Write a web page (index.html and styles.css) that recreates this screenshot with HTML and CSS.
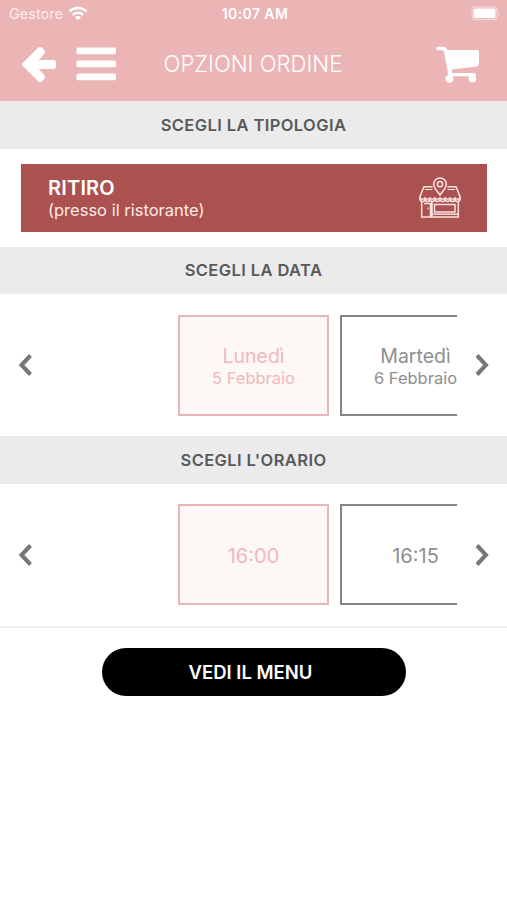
FILE: index.html
```html
<!DOCTYPE html>
<html lang="it">
<head>
    <meta charset="UTF-8">
    <meta name="viewport" content="width=device-width, initial-scale=1">
    <title>Opzioni ordine</title>
    <link rel="stylesheet" href="styles.css">
</head>
<body>
    <header class="header">
        <div class="status-bar">
            <div class="carrier">
                <span class="carrier-name">Gestore</span>
                <svg width="20" height="15" viewBox="0 0 20 15" fill="none" stroke="#fff" stroke-width="2.5">
                    <path d="M1.5 5.4C6.2 0.9 13.8 0.9 18.5 5.4"/>
                    <path d="M4.8 8.8C7.7 6 12.3 6 15.2 8.8"/>
                    <path d="M10 14L6.9 11C8.6 9.5 11.4 9.5 13.1 11Z" fill="#fff" stroke="none"/>
                </svg>
            </div>
            <span class="clock">10:07 AM</span>
            <svg class="battery" width="30" height="15" viewBox="0 0 30 15">
                <rect x="1" y="1" width="25" height="12.5" rx="3" fill="none" stroke="#f5d3d4" stroke-width="1.3"/>
                <rect x="2.5" y="2.5" width="22" height="9.5" rx="1.5" fill="#fff"/>
                <path d="M27.3 5.2C29.2 5.8 29.2 8.8 27.3 9.4Z" fill="#f5d3d4"/>
            </svg>
        </div>
        <nav class="navbar">
            <div class="nav-left">
                <svg width="34" height="37" viewBox="0 0 34 37" fill="#fff">
                    <path d="M0.8 17L15.8 2Q18.2 0 20.5 2.3L22 3.8Q24 6 22 8.4L16.5 14H31Q34 14 34 17V20Q34 23 31 23H16.5L22 28.6Q24 31 22 33.2L20.5 34.7Q18.2 37 15.8 35L0.8 20Q-0.5 18.5 0.8 17Z"/>
                </svg>
                <svg width="40" height="34" viewBox="0 0 40 34" fill="#fff">
                    <rect x="0.5" y="0.5" width="39.5" height="6.8" rx="1.5"/>
                    <rect x="0.5" y="13.5" width="39.5" height="6.8" rx="1.5"/>
                    <rect x="0.5" y="26.5" width="39.5" height="6.8" rx="1.5"/>
                </svg>
            </div>
            <h1>OPZIONI ORDINE</h1>
            <svg class="cart" width="44" height="38" viewBox="0 0 44 38">
                <path d="M2 2.5H7.5Q9 2.5 9.4 4.3L13.4 24.5" fill="none" stroke="#fff" stroke-width="3.6" stroke-linecap="round"/>
                <path d="M9 4H41Q43 4 43 6V18Q43 20 41 20.4L16 23.5V27H38Q40 27 40 28.6Q40 30.2 38 30.2H13Q11 29 12 25Z" fill="#fff"/>
                <circle cx="13.5" cy="32.7" r="4" fill="#fff"/>
                <circle cx="36.4" cy="32.7" r="3.8" fill="#fff"/>
            </svg>
        </nav>
    </header>

    <h2 class="section-title">SCEGLI LA TIPOLOGIA</h2>
    <div class="type-section">
        <div class="type-card">
            <div class="type-text">
                <div class="type-name">RITIRO</div>
                <div class="type-info">(presso il ristorante)</div>
            </div>
            <svg width="42" height="42" viewBox="0 0 42 42" fill="none" stroke="#fbe3df" stroke-width="1.5">
                <path d="M13.5 9.7H5L1 19.5V22H41V19.5L37 9.7H28.5"/>
                <path d="M6 12.5H13.5M28.5 12.5H36" stroke-width="1.2"/>
                <path d="M21 18C18.5 14 14.7 11.5 14.7 7.2A6.3 6.3 0 0 1 27.3 7.2C27.3 11.5 23.5 14 21 18Z"/>
                <circle cx="21" cy="7.2" r="2.6"/>
                <path d="M1 20V22A2.5 2.5 0 0 0 6 22A2.5 2.5 0 0 0 11 22A2.5 2.5 0 0 0 16 22A2.5 2.5 0 0 0 21 22A2.5 2.5 0 0 0 26 22A2.5 2.5 0 0 0 31 22A2.5 2.5 0 0 0 36 22A2.5 2.5 0 0 0 41 22V20M6 20V22M11 20V22M16 20V22M21 20V22M26 20V22M31 20V22M36 20V22"/>
                <path d="M2.7 24.5V40H39.3V24.5M5 26.5H11.5V40M13 25V40"/>
                <rect x="15.5" y="27.5" width="20.5" height="7.5"/>
                <path d="M13.5 37.2H39"/>
                <path d="M9 30.5V32.2" stroke-width="1.2"/>
            </svg>
        </div>
    </div>

    <h2 class="section-title">SCEGLI LA DATA</h2>
    <div class="slider">
        <svg class="arrow" width="14" height="24" viewBox="0 0 14 24">
            <path d="M12.5 2.5L3.5 12L12.5 21.5"/>
        </svg>
        <div class="slider-track">
            <div class="option selected">
                <div class="option-main">Lunedì</div>
                <div class="option-sub">5 Febbraio</div>
            </div>
            <div class="option">
                <div class="option-main">Martedì</div>
                <div class="option-sub">6 Febbraio</div>
            </div>
        </div>
        <svg class="arrow" width="14" height="24" viewBox="0 0 14 24">
            <path d="M2 2.5L11 12L2 21.5"/>
        </svg>
    </div>

    <h2 class="section-title">SCEGLI L'ORARIO</h2>
    <div class="slider">
        <svg class="arrow" width="14" height="24" viewBox="0 0 14 24">
            <path d="M12.5 2.5L3.5 12L12.5 21.5"/>
        </svg>
        <div class="slider-track">
            <div class="option selected">
                <div class="option-time">16:00</div>
            </div>
            <div class="option">
                <div class="option-time">16:15</div>
            </div>
        </div>
        <svg class="arrow" width="14" height="24" viewBox="0 0 14 24">
            <path d="M2 2.5L11 12L2 21.5"/>
        </svg>
    </div>

    <div class="footer">
        <button class="menu-button">VEDI IL MENU</button>
    </div>
</body>
</html>
```
FILE: styles.css
```css
* {
    box-sizing: border-box;
}

body {
    margin: 0;
    background: #fff;
    font-family: Inter, "Liberation Sans", sans-serif;
}

svg {
    display: block;
    flex-shrink: 0;
}

.header {
    height: 101px;
    background: #ebb4b5;
    color: #fff;
}

.status-bar {
    display: grid;
    grid-template-columns: 1fr auto 1fr;
    align-items: center;
    height: 27px;
    padding: 0 6px 0 9px;
    font-size: 14px;
}

.carrier {
    display: flex;
    align-items: center;
    gap: 5px;
}

.carrier-name {
    color: #fdeeea;
    font-size: 14.5px;
}

.clock {
    font-weight: 600;
    letter-spacing: 0.4px;
}

.battery {
    justify-self: end;
}

.navbar {
    display: grid;
    grid-template-columns: 1fr auto 1fr;
    align-items: center;
    height: 74px;
    padding: 0 27px 0 22px;
}

.nav-left {
    display: flex;
    align-items: center;
    gap: 20px;
}

.navbar h1 {
    margin: 0;
    padding: 0 0 2px 4px;
    font-size: 22.2px;
    font-weight: 300;
}

.cart {
    justify-self: end;
    margin-top: 2px;
}

.section-title {
    display: flex;
    align-items: center;
    justify-content: center;
    height: 47.5px;
    margin: 0;
    background: #ebebeb;
    color: #58595b;
    font-size: 16.5px;
    font-weight: 600;
    letter-spacing: 0.4px;
}

.type-section {
    padding: 15px 20px 15px 21px;
}

.type-card {
    display: flex;
    align-items: center;
    justify-content: space-between;
    height: 68px;
    padding: 0 26px 0 27px;
    background: #ab5150;
    color: #fff;
}

.type-text {
    padding-top: 2px;
}

.type-name {
    font-size: 20px;
    font-weight: 600;
    line-height: 24px;
    letter-spacing: 0.2px;
}

.type-info {
    color: #fdebe4;
    font-size: 16.5px;
    line-height: 21px;
}

.slider {
    display: flex;
    align-items: center;
    justify-content: space-between;
    height: 142px;
    padding: 0 18px;
}

.slider-track {
    display: flex;
    gap: 11px;
    width: 407px;
    padding-left: 128px;
    overflow: hidden;
}

.arrow {
    fill: none;
    stroke: #777;
    stroke-width: 4;
}

.option {
    display: flex;
    flex-direction: column;
    align-items: center;
    justify-content: center;
    flex-shrink: 0;
    width: 151px;
    height: 101px;
    padding-top: 2px;
    border: 2px solid #858587;
    color: #8e8e90;
}

.option.selected {
    border-color: #ebb5b7;
    background: #fdf7f6;
    color: #efb9bc;
}

.option-main {
    font-size: 19.5px;
    line-height: 24px;
}

.option-time {
    font-size: 20px;
    line-height: 24px;
}

.option-sub {
    font-size: 16.5px;
    line-height: 21px;
}

.footer {
    display: flex;
    justify-content: center;
    padding-top: 20px;
    border-top: 2px solid #ededed;
}

.menu-button {
    width: 304px;
    height: 48px;
    padding: 0 6px 0 0;
    border: none;
    border-radius: 24px;
    background: #000;
    color: #fff;
    font-family: inherit;
    font-size: 18.5px;
    font-weight: 600;
}
```
